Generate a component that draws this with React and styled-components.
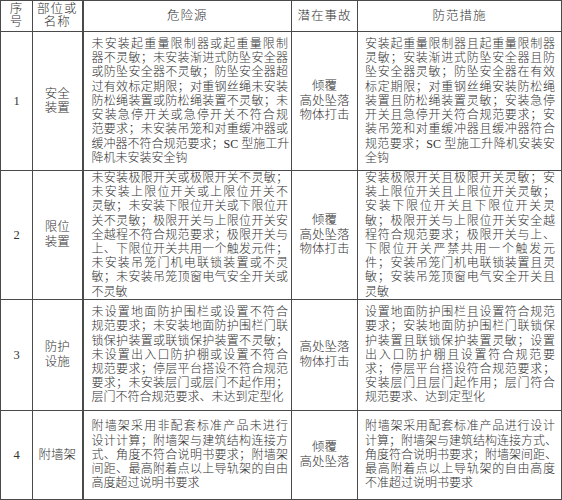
import React from "react";
import styled, { createGlobalStyle } from "styled-components";

const GlobalStyle = createGlobalStyle`
  html, body {
    margin: 0;
    padding: 0;
    background: #ffffff;
  }
  body {
    font-family: "Liberation Serif", "Noto Sans CJK SC", serif;
    color: #333333;
  }
`;

const rows = [
  {
    no: "1",
    height: 139,
    part: ["安全", "装置"],
    danger: [
      "未安装起重量限制器或起重量限制",
      "器不灵敏；未安装渐进式防坠安全器",
      "或防坠安全器不灵敏；防坠安全器超",
      "过有效标定期限；对重钢丝绳未安装",
      "防松绳装置或防松绳装置不灵敏；未",
      "安装急停开关或急停开关不符合规",
      "范要求；未安装吊笼和对重缓冲器或",
      "缓冲器不符合规范要求；SC 型施工升",
      "降机未安装安全钩",
    ],
    accident: ["倾覆", "高处坠落", "物体打击"],
    measure: [
      "安装起重量限制器且起重量限制器",
      "灵敏；安装渐进式防坠安全器且防",
      "坠安全器灵敏；防坠安全器在有效",
      "标定期限；对重钢丝绳安装防松绳",
      "装置且防松绳装置灵敏；安装急停",
      "开关且急停开关符合规范要求；安",
      "装吊笼和对重缓冲器且缓冲器符合",
      "规范要求；SC 型施工升降机安装安",
      "全钩",
    ],
  },
  {
    no: "2",
    height: 128,
    part: ["限位", "装置"],
    danger: [
      "未安装极限开关或极限开关不灵敏；",
      "未安装上限位开关或上限位开关不",
      "灵敏；未安装下限位开关或下限位开",
      "关不灵敏；极限开关与上限位开关安",
      "全越程不符合规范要求；极限开关与",
      "上、下限位开关共用一个触发元件；",
      "未安装吊笼门机电联锁装置或不灵",
      "敏；未安装吊笼顶窗电气安全开关或",
      "不灵敏",
    ],
    accident: ["倾覆", "高处坠落", "物体打击"],
    measure: [
      "安装极限开关且极限开关灵敏；安",
      "装上限位开关且上限位开关灵敏；",
      "安装下限位开关且下限位开关灵",
      "敏；极限开关与上限位开关安全越",
      "程符合规范要求；极限开关与上、",
      "下限位开关严禁共用一个触发元",
      "件；安装吊笼门机电联锁装置且灵",
      "敏；安装吊笼顶窗电气安全开关且",
      "灵敏",
    ],
  },
  {
    no: "3",
    height: 111,
    part: ["防护", "设施"],
    danger: [
      "未设置地面防护围栏或设置不符合",
      "规范要求；未安装地面防护围栏门联",
      "锁保护装置或联锁保护装置不灵敏；",
      "未设置出入口防护棚或设置不符合",
      "规范要求；停层平台搭设不符合规范",
      "要求；未安装层门或层门不起作用；",
      "层门不符合规范要求、未达到定型化",
    ],
    accident: ["高处坠落", "物体打击"],
    measure: [
      "设置地面防护围栏且设置符合规范",
      "要求；安装地面防护围栏门联锁保",
      "护装置且联锁保护装置灵敏；设置",
      "出入口防护棚且设置符合规范要",
      "求；停层平台搭设符合规范要求；",
      "安装层门且层门起作用；层门符合",
      "规范要求、达到定型化",
    ],
  },
  {
    no: "4",
    height: 89,
    part: ["附墙架"],
    danger: [
      "附墙架采用非配套标准产品未进行",
      "设计计算；附墙架与建筑结构连接方",
      "式、角度不符合说明书要求；附墙架",
      "间距、最高附着点以上导轨架的自由",
      "高度超过说明书要求",
    ],
    accident: ["倾覆", "高处坠落"],
    measure: [
      "附墙架采用配套标准产品进行设计",
      "计算；附墙架与建筑结构连接方式、",
      "角度符合说明书要求；附墙架间距、",
      "最高附着点以上导轨架的自由高度",
      "不准超过说明书要求",
    ],
  },
];

const Table = styled.table`
  border-collapse: collapse;
  table-layout: fixed;
  width: 561px;
  border: 1.5px solid #3c3c3c;
`;

const Col = styled.col`
  width: ${(p) => p.$w}px;
`;

const HeadRow = styled.tr`
  height: 31px;
`;

const BodyRow = styled.tr`
  height: ${(p) => p.$h}px;
`;

const HeadCell = styled.th`
  border: 1px solid #4a4a4a;
  border-left-width: ${(p) => (p.$thick ? 2 : 1)}px;
  padding: 0;
  font-weight: 300;
  font-size: 12.5px;
  line-height: 13px;
  text-align: center;
  vertical-align: middle;
  letter-spacing: 1px;
`;

const CenterCell = styled.td`
  border: 1px solid #4a4a4a;
  padding: 0 2px;
  font-size: 12.5px;
  font-weight: 300;
  line-height: 14.5px;
  text-align: center;
  vertical-align: middle;
`;

const TextCell = styled.td`
  border: 1px solid #4a4a4a;
  border-left-width: ${(p) => (p.$thick ? 2 : 1)}px;
  padding: ${(p) => (p.$measure ? "0 6px 0 7px" : "0 3px 0 8px")};
  font-size: 12px;
  font-weight: 300;
  line-height: 14.2px;
  vertical-align: middle;
`;

const Line = styled.div`
  text-align: ${(p) => (p.$last ? "left" : "justify")};
  text-align-last: ${(p) => (p.$last ? "left" : "justify")};
  white-space: nowrap;
`;

const Lines = ({ items }) =>
  items.map((t, i) => (
    <Line key={i} $last={i === items.length - 1}>
      {t}
    </Line>
  ));

const Stack = ({ items }) =>
  items.map((t, i) => <div key={i}>{t}</div>);

export default function App() {
  return (
    <>
      <GlobalStyle />
      <Table>
        <colgroup>
          <Col $w={32} />
          <Col $w={50} />
          <Col $w={209} />
          <Col $w={66} />
          <Col $w={204} />
        </colgroup>
        <thead>
          <HeadRow>
            <HeadCell>
              序<br />号
            </HeadCell>
            <HeadCell>
              部位或
              <br />
              名称
            </HeadCell>
            <HeadCell $thick>危险源</HeadCell>
            <HeadCell>潜在事故</HeadCell>
            <HeadCell>防范措施</HeadCell>
          </HeadRow>
        </thead>
        <tbody>
          {rows.map((r) => (
            <BodyRow key={r.no} $h={r.height}>
              <CenterCell>{r.no}</CenterCell>
              <CenterCell>
                <Stack items={r.part} />
              </CenterCell>
              <TextCell $thick>
                <Lines items={r.danger} />
              </TextCell>
              <CenterCell>
                <Stack items={r.accident} />
              </CenterCell>
              <TextCell $measure>
                <Lines items={r.measure} />
              </TextCell>
            </BodyRow>
          ))}
        </tbody>
      </Table>
    </>
  );
}
